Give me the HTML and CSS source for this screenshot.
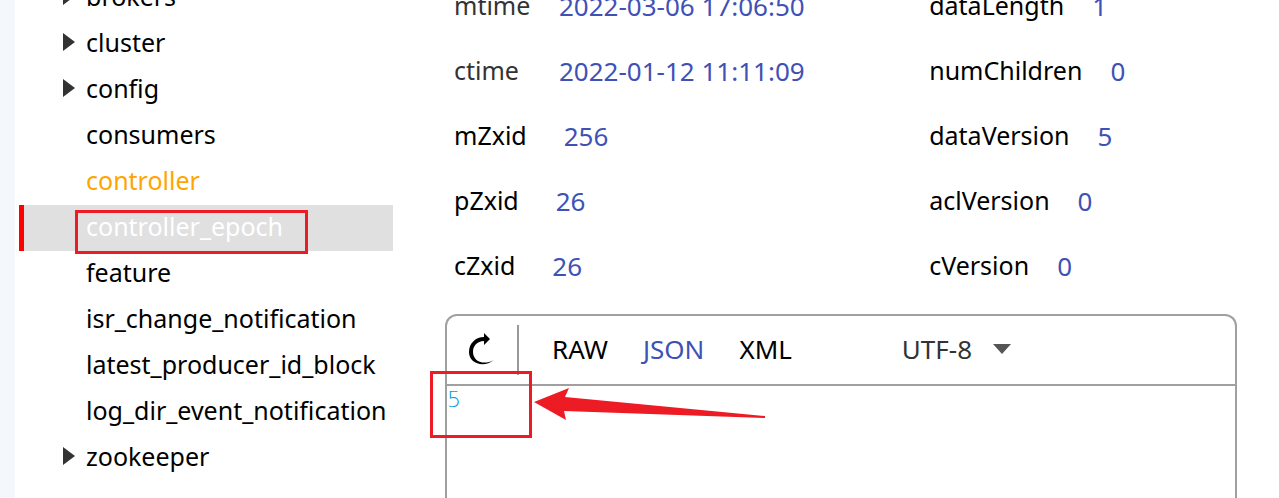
FILE: index.html
```html
<!DOCTYPE html>
<html lang="en">
<head>
<meta charset="utf-8">
<meta name="viewport" content="width=device-width, initial-scale=1">
<title>ZooKeeper node browser</title>
<link rel="stylesheet" href="styles.css">
</head>
<body>
<div class="app">
  <nav class="sidebar" aria-label="Nodes">
    <ul class="tree">
      <li><button class="node" type="button"><svg class="twisty" viewBox="0 0 12 18" aria-hidden="true"><path d="M0 0 12 9 0 18Z"/></svg>brokers</button></li>
      <li><button class="node" type="button"><svg class="twisty" viewBox="0 0 12 18" aria-hidden="true"><path d="M0 0 12 9 0 18Z"/></svg>cluster</button></li>
      <li><button class="node" type="button"><svg class="twisty" viewBox="0 0 12 18" aria-hidden="true"><path d="M0 0 12 9 0 18Z"/></svg>config</button></li>
      <li><button class="node leaf" type="button">consumers</button></li>
      <li><button class="node leaf ephemeral" type="button">controller</button></li>
      <li><button class="node leaf selected" type="button">controller_epoch<span class="mark mark-node"></span></button></li>
      <li><button class="node leaf" type="button">feature</button></li>
      <li><button class="node leaf" type="button">isr_change_notification</button></li>
      <li><button class="node leaf" type="button">latest_producer_id_block</button></li>
      <li><button class="node leaf" type="button">log_dir_event_notification</button></li>
      <li><button class="node" type="button"><svg class="twisty" viewBox="0 0 12 18" aria-hidden="true"><path d="M0 0 12 9 0 18Z"/></svg>zookeeper</button></li>
    </ul>
  </nav>
  <main class="content">
    <div class="stats">
      <dl class="stat-list">
        <div class="stat time"><dt>mtime</dt><dd>2022-03-06 17:06:50</dd></div>
        <div class="stat time"><dt>ctime</dt><dd>2022-01-12 11:11:09</dd></div>
        <div class="stat wide"><dt>mZxid</dt><dd>256</dd></div>
        <div class="stat wide"><dt>pZxid</dt><dd>26</dd></div>
        <div class="stat wide"><dt>cZxid</dt><dd>26</dd></div>
      </dl>
      <dl class="stat-list">
        <div class="stat"><dt>dataLength</dt><dd>1</dd></div>
        <div class="stat"><dt>numChildren</dt><dd>0</dd></div>
        <div class="stat"><dt>dataVersion</dt><dd>5</dd></div>
        <div class="stat"><dt>aclVersion</dt><dd>0</dd></div>
        <div class="stat"><dt>cVersion</dt><dd>0</dd></div>
      </dl>
    </div>
    <section class="viewer" aria-label="Node data">
      <div class="toolbar">
        <button class="reload" type="button" aria-label="Reload">
          <svg viewBox="0 0 26 34" aria-hidden="true"><path d="M15 1 21 7 15 13V9C8 9 4 14 4 20 4 29 14 34 25 28 15 36 0 32 0 20 0 11 7 5 15 5Z"/></svg>
        </button>
        <div class="formats">
          <button type="button">RAW</button>
          <button class="active" type="button">JSON</button>
          <button type="button">XML</button>
        </div>
        <div class="charset">
          <select aria-label="Charset"><option>UTF-8</option></select>
          <svg viewBox="0 0 18 10" aria-hidden="true"><path d="M0 0H18L9 10Z"/></svg>
        </div>
      </div>
      <div class="data">
        <code>5</code>
        <span class="mark mark-value"></span>
        <svg class="arrow" viewBox="0 0 232 34" aria-hidden="true"><path d="M0 15 35 1 31 10 231 29V31L30 24 32 33Z"/></svg>
      </div>
    </section>
  </main>
</div>
</body>
</html>
```
FILE: styles.css
```css
* { box-sizing: border-box; }

body {
  margin: 0;
  background: #fff;
  color: #000;
  font: 25px/40px "Noto Sans", "Open Sans", sans-serif;
}

button, select {
  margin: 0;
  padding: 0;
  border: 0;
  background: none;
  color: inherit;
  font: inherit;
}

.app {
  display: flex;
  height: 100vh;
  overflow: hidden;
  border-left: 15px solid #f4f8fc;
}

/* Node tree */
.sidebar { flex: 0 0 378px; padding-left: 4px; }
.tree { margin: -25px 0 0; padding: 0; list-style: none; }
.node {
  position: relative;
  display: flex;
  align-items: center;
  gap: 11px;
  width: 100%;
  height: 46px;
  padding: 0 0 4px 39px;
  border-left: 5px solid transparent;
  white-space: nowrap;
}
.leaf { padding-left: 62px; }
.twisty { width: 12px; height: 18px; fill: #333; }
.ephemeral { color: #ffa500; }
.selected { background: #e0e0e0; border-left-color: #f00; color: #fff; }

/* Node details */
.content {
  flex: 1;
  display: flex;
  flex-direction: column;
  min-width: 0;
  padding: 0 42px 0 52px;
}
.stats { display: grid; grid-template-columns: 3fr 2fr; margin: -26px 0 15px; }
.stat-list { margin: 0; padding-left: 9px; }
.stat { display: flex; align-items: center; gap: 28px; height: 65px; padding-bottom: 1px; white-space: nowrap; }
.stat dt { padding-bottom: 2px; }
.stat dd { margin: 0; color: #3f51b5; font-size: 26px; }
.stat.wide { gap: 37px; }
.time dt { min-width: 77px; color: #333; }

/* Data viewer */
.viewer { flex: 1; display: flex; flex-direction: column; font-size: 26px; }
.toolbar {
  display: flex;
  align-items: center;
  height: 70px;
  border: 2px solid #a0a0a0;
  border-bottom: 0;
  border-radius: 12px 12px 0 0;
}
.reload {
  display: flex;
  align-items: center;
  width: 72px;
  height: 50px;
  padding: 0 0 2px 22px;
  border-right: 2px solid #999;
}
.reload svg { width: 26px; height: 34px; }
.formats { display: flex; gap: 35px; margin-left: 33px; padding-bottom: 2px; }
.active { color: #3f51b5; }
.charset { display: flex; align-items: center; gap: 20px; margin-left: 110px; padding-bottom: 2px; color: #333; }
.charset select { appearance: none; }
.charset svg { width: 18px; height: 10px; fill: #555; }
.data { position: relative; flex: 1; border: 2px solid #a0a0a0; border-bottom: 0; }
.data code {
  display: block;
  color: #009de0;
  font: 200 22px/28px "DejaVu Sans", sans-serif;
}

/* Highlights */
.mark { position: absolute; border: 3px solid #ed1c24; }
.mark-node { top: 5px; left: 51px; width: 233px; height: 44px; z-index: 1; }
.mark-value { top: -15px; left: -17px; width: 102px; height: 67px; }
.arrow { position: absolute; top: 1px; left: 87px; width: 232px; height: 34px; fill: #ed1c24; }
```
